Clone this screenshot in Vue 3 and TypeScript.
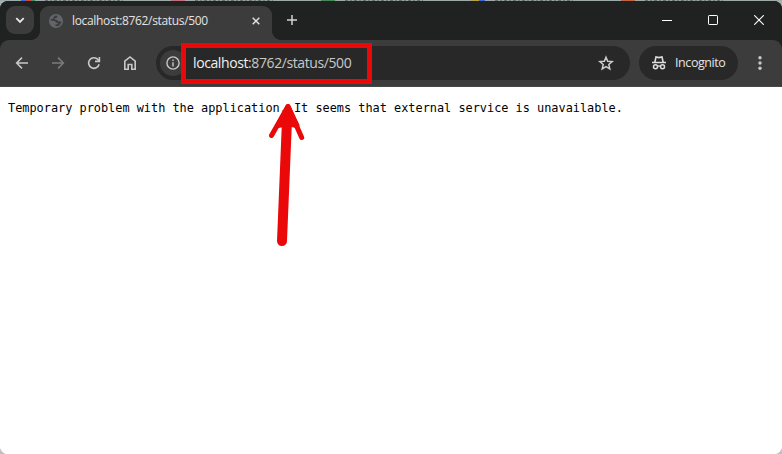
<script setup lang="ts">
import { computed, ref } from 'vue'

const host = ref('localhost')
const rest = ref(':8762/status/500')
const title = computed(() => host.value + rest.value)
const message = 'Temporary problem with the application. It seems that external service is unavailable.'
const backdropTabs: string[] = ['multi', 'pink', 'leaf', 'gold', 'orange']
</script>

<template>
  <div class="desktop">
    <div class="backdrop">
      <div v-for="tone in backdropTabs" :key="tone" class="slot">
        <i class="blob" :class="tone"></i><i class="dashes"></i>
      </div>
    </div>
    <div class="window">
      <header class="tabstrip">
        <button class="search" aria-label="Search tabs">
          <svg width="28" height="28" viewBox="0 0 28 28"><path d="M10.3 12.2 14 15.9l3.7-3.7" fill="none" stroke="#e6e6e6" stroke-width="1.9" /></svg>
        </button>
        <div class="tab">
          <svg class="globe" width="14" height="14" viewBox="0 0 14 14">
            <circle cx="7" cy="7" r="7" fill="#62666b" />
            <path d="M6.4 1.6 8.6 1.8 8.2 3.6 6 4.3 5.8 5.6 7.8 5.7 9 7.3 12.4 7.4 12 9.3 10.3 11.5 8.2 12.2 6.3 12.1 6.5 10.6 9 10 8.6 8.9 6.8 8.6 6.3 7.2 4 7 1.6 6.3 2 4.8 4.2 4.9 4.4 3Z" fill="#3c3c3c" />
          </svg>
          <span class="title">{{ title }}</span>
          <svg class="close" width="8" height="8" viewBox="0 0 8 8"><path d="m.7.7 6.6 6.6m0-6.6L.7 7.3" stroke="#e1e1e1" stroke-width="1.5" /></svg>
        </div>
        <svg class="plus" width="12" height="12" viewBox="0 0 12 12"><path d="M6 1v10M1 6h10" stroke="#d3d3d3" stroke-width="1.5" /></svg>
        <div class="controls">
          <svg width="10" height="10" viewBox="0 0 10 10"><path d="M0 5.5h10" stroke="#fff" /></svg>
          <svg width="10" height="10" viewBox="0 0 10 10"><rect x=".5" y=".5" width="9" height="9" rx=".7" fill="none" stroke="#fff" /></svg>
          <svg width="10" height="10" viewBox="0 0 10 10"><path d="m.2.2 9.6 9.6m0-9.6L.2 9.8" stroke="#fff" stroke-width="1.1" /></svg>
        </div>
      </header>

      <nav class="toolbar">
        <div class="nav">
          <svg width="16" height="16" viewBox="0 0 16 16"><path d="M14 8H3M8 2.6 2.6 8 8 13.4" fill="none" stroke="#c8c8c8" stroke-width="1.5" /></svg>
          <svg width="16" height="16" viewBox="0 0 16 16"><path d="M2 8h11M8 2.6 13.4 8 8 13.4" fill="none" stroke="#7b7b7b" stroke-width="1.5" /></svg>
          <svg width="16" height="16" viewBox="0 0 16 16" fill="none" stroke="#c8c8c8" stroke-width="1.6"><path d="M13.1 9.2A5.3 5.3 0 1 1 12 4.6l1.2 1.2" /><path d="M13.4 2v4.4H9" /></svg>
          <svg width="16" height="16" viewBox="0 0 16 16"><path d="M2.8 6.2 8 2l5.2 4.2v8.1H9.8V9.5H6.2v4.8H2.8Z" fill="none" stroke="#c8c8c8" stroke-width="1.6" /></svg>
        </div>
        <div class="address">
          <span class="info">
            <svg width="14" height="14" viewBox="0 0 14 14"><circle cx="7" cy="7" r="6.1" fill="none" stroke="#c8c8c8" stroke-width="1.4" /><path d="M7 6.2v4.2M7 3.5V5" stroke="#c8c8c8" stroke-width="1.4" /></svg>
          </span>
          <span class="url"><b>{{ host }}</b>{{ rest }}</span>
          <svg class="star" width="16" height="16" viewBox="0 0 16 16"><path d="m8 2.2 1.7 4 4.5.4-3.4 2.9 1 4.4L8 11.6l-3.8 2.3 1-4.4-3.4-2.9 4.5-.4Z" fill="none" stroke="#cdcdcd" stroke-width="1.5" /></svg>
          <div class="highlight"></div>
        </div>
        <div class="incognito">
          <svg width="16" height="16" viewBox="0 0 16 16" fill="none" stroke="#ddd">
            <path d="M1 7.5h14M3.8 7.5 5 1.9 8 2.6l3-.7 1.2 5.6" stroke-width="1.6" />
            <circle cx="4.5" cy="11.7" r="2" stroke-width="1.5" /><circle cx="11.5" cy="11.7" r="2" stroke-width="1.5" />
            <path d="M6.4 11.4q1.6-.9 3.2 0" stroke-width="1.3" />
          </svg>
          <span>Incognito</span>
        </div>
        <svg class="menu" width="4" height="16" viewBox="0 0 4 16" fill="#c8c8c8"><circle cx="2" cy="2.7" r="1.7" /><circle cx="2" cy="8" r="1.7" /><circle cx="2" cy="13.3" r="1.7" /></svg>
      </nav>

      <main class="page">
        <pre>{{ message }}</pre>
        <svg class="arrow" width="40" height="144" viewBox="0 0 40 144" stroke="#ea0808" stroke-linecap="round" stroke-linejoin="round" fill="none">
          <path d="M18.8 22 14 138" stroke-width="10" />
          <path d="M3.5 32.5 20 3.5 33.7 34.5" stroke-width="5" />
          <path d="M20 3.5 10 22.5l8.4-1.5h2.6l8 1.5Z" fill="#ea0808" stroke-width="5" />
        </svg>
      </main>
    </div>
  </div>
</template>

<style>
body { margin: 0; overflow: hidden; }
</style>

<style scoped>
* { box-sizing: border-box; }
.desktop { width: 782px; height: 454px; overflow: hidden; background: linear-gradient(#a9b2b2 50%, #c0c0c0 50%); font-family: "Open Sans", "Noto Sans", sans-serif; }
.backdrop { height: 1px; display: flex; padding-left: 21px; background: #9caaa9; }
.slot { display: flex; gap: 10px; width: 150px; flex: none; }
.blob { width: 14px; }
.multi { background: linear-gradient(90deg, #416bd0 33%, #c84747 33% 70%, #3f925c 70%); }
.pink { background: #c1717f; }
.leaf { background: #468a57; }
.gold { background: linear-gradient(90deg, #b9a13b 60%, #416bd0 60%); }
.orange { background: #c16543; }
.dashes { width: 78px; background: repeating-linear-gradient(90deg, #68716f 0 3px, #98a4a3 3px 5px, #75807e 5px 7px, #98a4a3 7px 9px); }
.window { height: 453px; overflow: hidden; border-radius: 8px; background: linear-gradient(#202221 60px, #fff 60px); }
.tabstrip { display: flex; height: 39px; padding: 5px 0 0 6px; background: #202221; }
.search { width: 28px; height: 28px; padding: 0; border: 0; border-radius: 9px; background: #3c3c3c; }
.search svg { display: block; }
.tab { position: relative; display: flex; align-items: center; width: 232px; height: 34px; margin-left: 6px; padding: 0 12px 5px 9px; border-radius: 9px 9px 0 0; background: #3c3c3c; }
.tab::before, .tab::after { content: ""; position: absolute; bottom: 0; width: 9px; height: 9px; }
.tab::before { left: -9px; background: radial-gradient(circle at 0 0, transparent 8.6px, #3c3c3c 9.2px); }
.tab::after { right: -9px; background: radial-gradient(circle at 100% 0, transparent 8.6px, #3c3c3c 9.2px); }
.title { margin-left: 9px; font-size: 12px; line-height: 18px; letter-spacing: -.34px; color: #e3e3e3; white-space: nowrap; }
.close { margin-left: auto; }
.plus { margin: 8px 0 0 14px; }
.controls { display: flex; gap: 36px; margin: 9px 18px 0 auto; }
.toolbar { display: flex; align-items: center; height: 47px; padding: 0 20px 1px 14px; background: #3c3c3c; border-bottom: 1px solid #484848; border-radius: 9px 9px 0 0; }
.nav { display: flex; gap: 20px; width: 142px; }
.address { position: relative; display: flex; align-items: center; width: 474px; height: 34px; padding: 0 16px 0 4px; border-radius: 17px; background: #282828; }
.info { display: grid; place-items: center; width: 26px; height: 26px; border-radius: 13px; background: #3c3c3c; }
.url { margin-left: 7px; font-size: 14px; line-height: 20px; letter-spacing: -.4px; color: #c8c8c8; white-space: nowrap; }
.url b { font-weight: 400; color: #f0f0f0; }
.star { margin-left: auto; }
.highlight { position: absolute; left: 25px; top: -3px; width: 191px; height: 41px; border: 5px solid #ea0808; }
.incognito { display: flex; align-items: center; width: 99px; height: 34px; margin-left: 9px; padding-left: 12px; border-radius: 17px; background: #282828; font-size: 12.5px; letter-spacing: -.42px; color: #e3e3e3; }
.incognito span { margin-left: 8px; }
.menu { margin-left: auto; }
.page { position: relative; height: 367px; padding: 13px 8px; background: #fff; }
pre { margin: 0; font: 11.88px/17px "DejaVu Sans Mono", monospace; color: #000; }
.arrow { position: absolute; left: 268px; top: 16px; }
</style>
